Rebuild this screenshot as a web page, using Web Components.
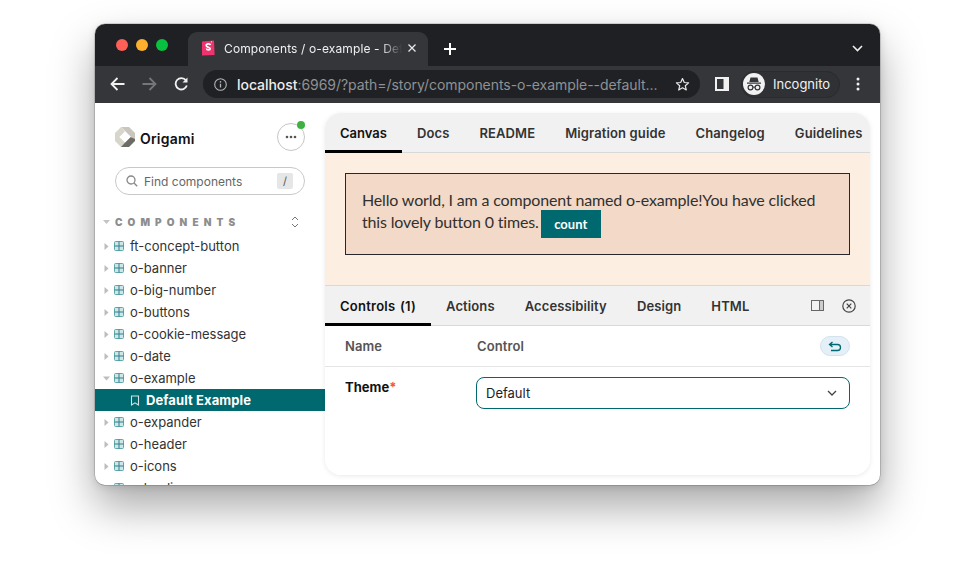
<!DOCTYPE html>
<html lang="en">
<head>
<meta charset="utf-8">
<title>Origami</title>
<style>
html,body{margin:0;background:#fff;height:561px;overflow:hidden}
body{font-family:Inter,"Liberation Sans",sans-serif;padding:24px 91px 0 95px;box-sizing:border-box}
.page{display:flex;flex:1;min-height:0;height:358px}
</style>
</head>
<body>
<browser-window>
  <browser-tabbar></browser-tabbar>
  <browser-toolbar></browser-toolbar>
  <div class="page">
    <sb-sidebar>
      <sb-tree-item name="ft-concept-button"></sb-tree-item>
      <sb-tree-item name="o-banner"></sb-tree-item>
      <sb-tree-item name="o-big-number"></sb-tree-item>
      <sb-tree-item name="o-buttons"></sb-tree-item>
      <sb-tree-item name="o-cookie-message"></sb-tree-item>
      <sb-tree-item name="o-date"></sb-tree-item>
      <sb-tree-item name="o-example" open></sb-tree-item>
      <sb-tree-item name="Default Example" story></sb-tree-item>
      <sb-tree-item name="o-expander"></sb-tree-item>
      <sb-tree-item name="o-header"></sb-tree-item>
      <sb-tree-item name="o-icons"></sb-tree-item>
      <sb-tree-item name="o-loading"></sb-tree-item>
    </sb-sidebar>
    <sb-main>
      <sb-tabs style="--h:39px;--ls-on:0px" active="Canvas" items="Canvas|Docs|README|Migration guide|Changelog|Guidelines"></sb-tabs>
      <sb-canvas></sb-canvas>
      <sb-tabs style="--h:39px;--top:1px;--ws:1px;--ls-on:.25px" active="Controls (1)" items="Controls (1)|Actions|Accessibility|Design|HTML" tools></sb-tabs>
      <sb-controls></sb-controls>
    </sb-main>
  </div>
</browser-window>

<script>
const el = (name, css, html, render) => customElements.define(name, class extends HTMLElement {
  connectedCallback() {
    if (this.shadowRoot) return;
    const s = this.attachShadow({mode:'open'});
    s.innerHTML = `<style>${css}</style>` + (render ? render(this) : html);
  }
});

el('browser-window', `
  :host{display:flex;flex-direction:column;width:785px;height:461px;border-radius:10px;overflow:hidden;background:#fff;
    box-shadow:0 0 0 .5px rgba(0,0,0,.28),0 22px 44px rgba(0,0,0,.34),0 2px 8px rgba(0,0,0,.12)}
`, `<slot></slot>`);

el('browser-tabbar', `
  :host{display:flex;align-items:flex-end;height:42px;flex:none;background:#1f2023;position:relative;color:#fff;font:12px Inter,sans-serif}
  .lights{display:flex;gap:8px;margin:0 0 15px 21px;width:72px;flex:none}
  .lights i{width:12px;height:12px;border-radius:50%}
  .tab{box-sizing:border-box;width:240px;height:34px;background:#35363a;border-radius:9px 9px 0 0;display:flex;align-items:center;padding:0 11px 2px 13px;gap:9px;position:relative}
  .tab span{flex:1;white-space:nowrap;overflow:hidden;font-size:12px;color:#f0f0f1;letter-spacing:.01em;margin-right:-6px;
    -webkit-mask-image:linear-gradient(90deg,#000 87%,transparent 99%);mask-image:linear-gradient(90deg,#000 87%,transparent 99%)}
  .plus{margin:0 0 11px 16px;flex:none}
  .chev{position:absolute;right:17px;top:21px}
  svg{display:block;flex:none}
`, `
  <div class="lights"><i style="background:#fe5f57"></i><i style="background:#fdb02e"></i><i style="background:#09c13f"></i></div>
  <div class="tab">
    <svg width="14" height="16" viewBox="0 0 14 16"><path d="M1 1.400 13 .6 13.600 15 1 15.400Z" fill="#f0336f"/><path d="M9.400 5.200c-.1-1-.9-1.300-2-1.300-1.300 0-2.200.6-2.200 1.700 0 2.300 4 1.400 4 3.200 0 .8-.7 1.100-1.700 1.100-1.100 0-1.900-.4-2-1.400" fill="none" stroke="#fff" stroke-width="1.700"/><path d="M10 1 10.300 3 11 1.700Z" fill="#fff"/></svg>
    <span>Components / o-example - Def</span>
    <svg width="10" height="10" viewBox="0 0 10 10"><path d="M1.500 1.500l7 7M8.500 1.500l-7 7" stroke="#e8e8e9" stroke-width="1.300"/></svg>
  </div>
  <svg class="plus" width="12" height="12" viewBox="0 0 12 12"><path d="M6 0v12M0 6h12" stroke="#fff" stroke-width="2"/></svg>
  <svg class="chev" width="11" height="7" viewBox="0 0 11 7"><path d="M1 1l4.500 4.500L10 1" fill="none" stroke="#eee" stroke-width="1.600"/></svg>
`);

el('browser-toolbar', `
  :host{display:flex;align-items:center;height:37px;flex:none;background:#35363a;color:#fff;font:14px Inter,sans-serif;box-sizing:border-box;padding:0 0 1px 15px}
  svg{display:block;flex:none}
  .nav{display:flex;gap:17px;align-items:center;margin-right:14px}
  .url{box-sizing:border-box;width:497px;height:28px;border-radius:14px;background:#202124;display:flex;align-items:center;padding:0 10px 0 11px;margin-right:15px;flex:none}
  .text{flex:1;white-space:nowrap;overflow:hidden;margin-left:10px;font-size:14px;color:#8f9194;letter-spacing:-.05px}
  .text b{font-weight:500;color:#eceded}
  .incog{display:flex;align-items:center;gap:8px;box-sizing:border-box;height:27px;width:99px;border-radius:14px;border:1px solid #2a2b2e;background:#303134;padding-left:1px;margin-left:12px;font-size:13px;color:#f1f1f2;flex:none}
  .dots{margin-left:16px}
`, `
  <div class="nav">
    <svg width="15" height="14" viewBox="0 0 15 14"><path d="M14.500 7H1.500M7.500 1l-6 6 6 6" fill="none" stroke="#f1f1f2" stroke-width="1.800"/></svg>
    <svg width="15" height="14" viewBox="0 0 15 14"><path d="M.5 7h13M7.500 1l6 6-6 6" fill="none" stroke="#75767a" stroke-width="1.800"/></svg>
    <svg width="15" height="14" viewBox="0 0 15 14"><path d="M12.800 8.500a5.700 5.700 0 1 1-.9-5.200" fill="none" stroke="#f1f1f2" stroke-width="1.800"/><path d="M13.500.5v5h-5Z" fill="#f1f1f2"/></svg>
  </div>
  <div class="url">
    <svg width="13" height="13" viewBox="0 0 13 13"><circle cx="6.500" cy="6.500" r="5.800" fill="none" stroke="#b4b5b7" stroke-width="1.100"/><path d="M6.500 5.800v3.600" stroke="#b4b5b7" stroke-width="1.300"/><circle cx="6.500" cy="3.900" r=".8" fill="#b4b5b7"/></svg>
    <div class="text"><b>localhost</b>:6969/?path=/story/components-o-example--default...</div>
    <svg width="15" height="15" viewBox="0 0 15 15"><path d="M7.500 1.500l1.800 4 4.300.4-3.300 2.900 1 4.200-3.800-2.200-3.800 2.200 1-4.200L1.400 5.900l4.300-.4Z" fill="none" stroke="#e8e8e9" stroke-width="1.200" stroke-linejoin="round"/></svg>
  </div>
  <svg width="14" height="14" viewBox="0 0 14 14"><path d="M0 0h14v14H0Z" fill="#f1f1f2"/><path d="M2 2h6.500v10H2Z" fill="#35363a"/></svg>
  <div class="incog">
    <svg width="22" height="22" viewBox="0 0 22 22"><circle cx="11" cy="11" r="11" fill="#f1f1f2"/><path d="M7.500 4.500h7l1.200 4.500H6.300Z M4 9.500h14v1.200H4Z" fill="#35363a"/><circle cx="7.500" cy="14.500" r="2.400" fill="none" stroke="#35363a" stroke-width="1.200"/><circle cx="14.500" cy="14.500" r="2.400" fill="none" stroke="#35363a" stroke-width="1.200"/><path d="M10 14.200h2" stroke="#35363a" stroke-width="1"/></svg>
    <span>Incognito</span>
  </div>
  <svg class="dots" width="4" height="14" viewBox="0 0 4 14"><circle cx="2" cy="2" r="1.500" fill="#f1f1f2"/><circle cx="2" cy="7" r="1.500" fill="#f1f1f2"/><circle cx="2" cy="12" r="1.500" fill="#f1f1f2"/></svg>
`);

el('sb-sidebar', `
  :host{display:block;width:230px;flex:none;font:13px Inter,sans-serif;color:#222;overflow:hidden;box-sizing:border-box;padding-top:20px}
  svg{display:block;flex:none}
  .brand{display:flex;align-items:center;padding:0 20px;height:28px}
  .logo{margin-right:5px}
  .name{flex:1;font-size:14px;font-weight:600;color:#111;letter-spacing:.2px;padding-top:2px}
  .more{box-sizing:border-box;width:28px;height:28px;border-radius:50%;border:1px solid #c6c6c6;display:flex;align-items:center;justify-content:center;position:relative}
  .more::after{content:"";position:absolute;right:-1px;top:-3px;width:8px;height:8px;border-radius:50%;background:#3fb143}
  .search{box-sizing:border-box;margin:16px 20px 0;height:28px;border:1px solid #c8c8c8;border-radius:14px;display:flex;align-items:center;padding:0 11px 0 10px;gap:6px;color:#666;font-size:12px}
  .search span{flex:1}
  .search kbd{font:11px Inter,sans-serif;width:16px;height:16px;background:#e6e6e6;border-radius:2px;display:flex;align-items:center;justify-content:center;color:#555}
  .head{display:flex;align-items:center;height:22px;margin-top:16px;padding:0 26px 0 8px;box-sizing:border-box;margin-bottom:2px}
  .head h2{flex:1;margin:0 0 0 5px;font:900 10px Inter,sans-serif;letter-spacing:.51em;color:#8d8d8d}
`, `
  <div class="brand">
    <svg class="logo" width="20" height="20" viewBox="0 0 20 20"><path d="M6 0h8l6 6v8l-5-5-5-5Z" fill="#c9c6bd"/><path d="M6 0 0 6v8l6 6 4-4.500L4.500 10 10 4.500Z" fill="#d8d5cb"/><path d="M6 20h8l6-6v-2L15.500 10 10 15.500Z" fill="#6d6b66"/><path d="M10 4.500 15.500 10 10 15.500 4.500 10Z" fill="#fff"/></svg>
    <span class="name">Origami</span>
    <div class="more"><svg width="12" height="4" viewBox="0 0 12 4"><circle cx="2" cy="2" r="1.300" fill="#555"/><circle cx="6" cy="2" r="1.300" fill="#555"/><circle cx="10" cy="2" r="1.300" fill="#555"/></svg></div>
  </div>
  <div class="search">
    <svg width="12" height="12" viewBox="0 0 12 12"><circle cx="5" cy="5" r="4" fill="none" stroke="#888" stroke-width="1.300"/><path d="M8 8l3.200 3.200" stroke="#888" stroke-width="1.400"/></svg>
    <span>Find components</span><kbd>/</kbd>
  </div>
  <div class="head">
    <svg width="7" height="4" viewBox="0 0 7 4"><path d="M0 0h7L3.500 4Z" fill="#c4c4c4"/></svg>
    <h2>COMPONENTS</h2>
    <svg width="8" height="12" viewBox="0 0 8 12"><path d="M1 4l3-3 3 3M1 8l3 3 3-3" fill="none" stroke="#777" stroke-width="1"/></svg>
  </div>
  <slot></slot>
`);

el('sb-tree-item', `
  :host{display:flex;align-items:center;height:22px;font:13px Inter,sans-serif;color:#333;white-space:nowrap;box-sizing:border-box;padding-left:9px;gap:5px}
  :host([story]){background:#00686f;color:#fff;font-weight:700;padding-left:35px;letter-spacing:.1px}
  svg{display:block;flex:none}
  .ic{margin-right:1px}
`, '', host => {
  const name = host.getAttribute('name');
  if (host.hasAttribute('story'))
    return `<svg width="10" height="11" viewBox="0 0 10 11" style="margin-right:1px"><path d="M1.500 1h7v9L5 7.800 1.500 10Z" fill="none" stroke="#cfe3e4" stroke-width="1.100"/></svg><span>${name}</span>`;
  const arrow = host.hasAttribute('open')
    ? `<svg width="7" height="7" viewBox="0 0 7 7" style="margin-left:-1px;margin-right:-1px"><path d="M0 1.500h7L3.500 5.500Z" fill="#bdbdbd"/></svg>`
    : `<svg width="5" height="7" viewBox="0 0 5 7"><path d="M.5 0 4.500 3.500.5 7Z" fill="#bdbdbd"/></svg>`;
  return `${arrow}<svg class="ic" width="10" height="10" viewBox="0 0 10 10"><rect x=".5" y=".5" width="9" height="9" rx="1" fill="#cfe6e8" stroke="#5fa7ad"/><path d="M5 .5v9M.5 5h9" stroke="#2f8087"/></svg><span>${name}</span>`;
});

el('sb-main', `
  :host{display:flex;flex-direction:column;width:545px;height:362px;margin-top:10px;flex:none;border-radius:16px;overflow:hidden;background:#fff;box-shadow:0 1px 5px rgba(0,0,0,.09)}
`, `<slot></slot>`);

el('sb-tabs', `
  :host{display:flex;flex:none;align-items:stretch;height:var(--h);box-sizing:content-box;background:#f1f1f1;border-bottom:1px solid #d9d9d9;border-top:var(--top,0) solid #d9d9d9;font:600 13px Inter,sans-serif;letter-spacing:.12px;word-spacing:var(--ws,0);color:#333;white-space:nowrap}
  .t{display:flex;align-items:center;padding:0 15px;position:relative}
  .t.on{color:#111;letter-spacing:var(--ls-on,.12px)}
  .t.on::after{content:"";position:absolute;left:0;right:0;bottom:-1px;height:3px;background:#000}
  .tools{margin-left:auto;display:flex;align-items:center;gap:18px;padding-right:14px}
  svg{display:block}
`, '', host => {
  const active = host.getAttribute('active');
  const tabs = host.getAttribute('items').split('|').map(t => `<div class="t${t===active?' on':''}">${t}</div>`).join('');
  const tools = host.hasAttribute('tools') ? `<div class="tools">
    <svg width="13" height="11" viewBox="0 0 13 11"><rect x=".5" y=".5" width="12" height="10" fill="none" stroke="#666"/><path d="M8.500 .5h4v10h-4Z" fill="#ccc" stroke="#666"/></svg>
    <svg width="14" height="14" viewBox="0 0 14 14"><circle cx="7" cy="7" r="6.200" fill="none" stroke="#444" stroke-width="1.200"/><path d="M4.700 4.700l4.600 4.600M9.300 4.700l-4.600 4.600" stroke="#444" stroke-width="1.200"/></svg>
  </div>` : '';
  return tabs + tools;
});

el('sb-canvas', `
  :host{display:block;box-sizing:border-box;height:132px;flex:none;background:#fdeee2;padding:20px 20px 0;font:16px Lato,"Open Sans",sans-serif;letter-spacing:-.16px;color:#33302e}
  .box{box-sizing:border-box;height:82px;background:#f2d9c8;border:1px solid #26262c;padding:15px 16px 0;line-height:22px}
  button{all:unset;display:inline-block;width:60px;height:28px;margin:-6px 0 -6px 2px;vertical-align:-1px;text-align:center;background:#00686f;color:#fff;font:700 13px/28px Lato,sans-serif;letter-spacing:0}
`, `<div class="box"><span>Hello world, I am a component named o-example!You have clicked</span> <span>this lovely button 0 times.</span><button>count</button></div>`);

el('sb-controls', `
  :host{display:block;flex:1;background:#fff;font:13px Inter,sans-serif;color:#333}
  .row{display:grid;grid-template-columns:131px 1fr;padding:0 20px}
  .head{height:40px;align-items:center;border-bottom:1px solid #e4e4e4;font-weight:600;color:#555;letter-spacing:.1px;grid-template-columns:132px 1fr 30px}
  .undo{box-sizing:border-box;width:30px;height:20px;border-radius:10px;background:#e4eff8;border:1px solid #d3e2ee;display:flex;align-items:center;justify-content:center}
  .theme{padding-top:10px}
  .theme label{font-weight:700;color:#111;padding-top:2px}
  .theme label i{font-style:normal;color:#f2553d}
  .sel{box-sizing:border-box;height:32px;border:1px solid #00686f;border-radius:8px;display:flex;align-items:center;justify-content:space-between;padding:0 12px 0 9px;color:#222}
  svg{display:block}
`, `
  <div class="row head"><span>Name</span><span>Control</span>
    <div class="undo"><svg width="14" height="11" viewBox="0 0 14 11"><path d="M4.500 1 1.500 3.500 4.500 6M1.500 3.500H9.500a3 3 0 0 1 0 6H3" fill="none" stroke="#00686f" stroke-width="1.300"/></svg></div>
  </div>
  <div class="row theme"><label>Theme<i>*</i></label>
    <div class="sel"><span>Default</span><svg width="10" height="6" viewBox="0 0 10 6"><path d="M1 1l4 4 4-4" fill="none" stroke="#444" stroke-width="1.300"/></svg></div>
  </div>
`);
</script>
</body>
</html>
